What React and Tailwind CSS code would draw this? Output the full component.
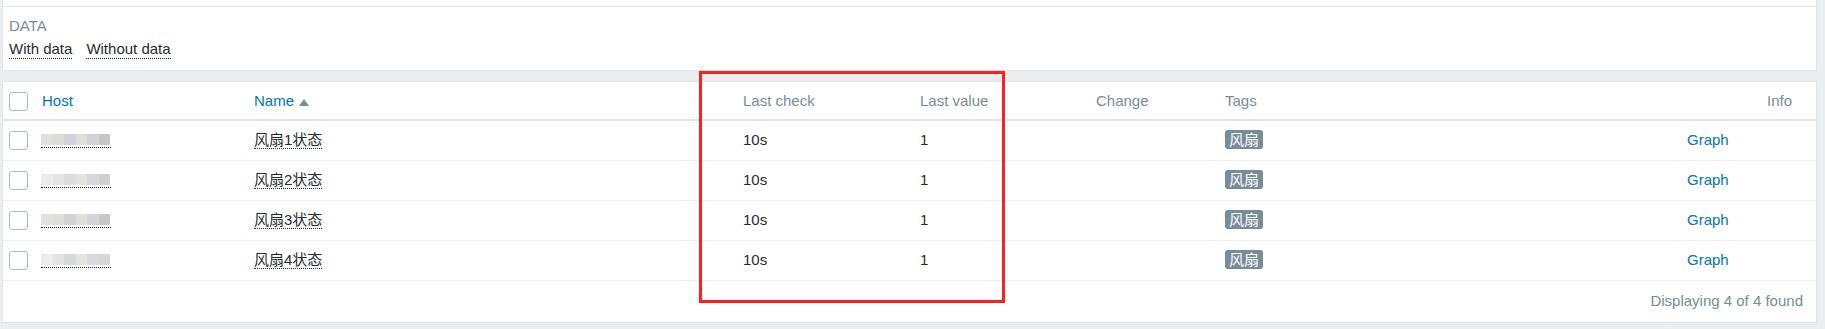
import React from 'react';

const cols = 'grid grid-cols-[33px_212px_489px_177px_176px_129px_462px_80px_55px]';

const blurColors = [
    ['#e2dfd7', '#dcdbd6', '#ced3d7', '#e0ded7', '#d3d3d6', '#c6c5c9'],
    ['#ecebe7', '#e6e5e1', '#d9dde0', '#e4e3de', '#d7d8db', '#d0d0d3'],
    ['#e3e1da', '#dfded8', '#cfd4d7', '#e1dfd9', '#d4d5d8', '#c8c7ca'],
    ['#eeede9', '#e4e4e0', '#d5d9dc', '#e5e4df', '#d8dadd', '#d9d6d9'],
];

const rows = [1, 2, 3, 4];

const BlurredHost = ({ palette }) => (
    <span className="inline-flex flex-col">
        <span className="flex h-[11px] blur-[0.6px]">
            {palette.map((c, i) => (
                <span key={i} className="w-[11.5px] h-full" style={{ background: c }} />
            ))}
        </span>
        <span className="mt-[2px] w-[70px] border-b border-dotted border-[#1f2c33]" />
    </span>
);

const Checkbox = () => (
    <span className="block w-[19px] h-[19px] border border-[#acbbc2] rounded-[3px] bg-white" />
);

export default function App() {
    return (
        <div className="relative w-[1825px] h-[329px] bg-[#ebeef0] font-['Liberation_Sans','Noto_Sans_CJK_SC',sans-serif] text-[15px] text-[#1f2c33] overflow-hidden">
            <div className="pl-[2px] pr-[8px]">
                {/* Filter */}
                <div className="bg-white border-x border-b border-[#dfe4e7]">
                    <div className="h-[7px] border-b border-[#dfe4e7]" />
                    <div className="pt-[10px] pb-[11px] pl-[6px]">
                        <div className="leading-[18px] text-[#768d99]">DATA</div>
                        <div className="mt-[5px] flex gap-[14px] leading-[18px]">
                            <span className="border-b border-dotted border-[#1f2c33]">With data</span>
                            <span className="border-b border-dotted border-[#1f2c33]">Without data</span>
                        </div>
                    </div>
                </div>

                {/* Table */}
                <div className="mt-[10px] bg-white border border-[#dfe4e7]">
                    <div className={`${cols} h-[39px] pt-[1px] items-center border-b-2 border-[#dfe4e7] text-[#768d99]`}>
                        <div className="pl-[6px]"><Checkbox /></div>
                        <div className="pl-[6px] text-[#0275b8]">Host</div>
                        <div className="pl-[6px] flex items-center gap-[5px] text-[#0275b8]">
                            Name
                            <svg width="10" height="7" viewBox="0 0 10 7" className="mt-[2px]">
                                <polygon points="5,0 10,7 0,7" fill="#768d99" />
                            </svg>
                        </div>
                        <div className="pl-[6px]">Last check</div>
                        <div className="pl-[6px]">Last value</div>
                        <div className="pl-[6px]">Change</div>
                        <div className="pl-[6px]">Tags</div>
                        <div />
                        <div className="pl-[6px]">Info</div>
                    </div>
                    {rows.map((n, i) => (
                        <div key={n} className={`${cols} h-[40px] items-center border-b border-[#ebeef0]`}>
                            <div className="pl-[6px]"><Checkbox /></div>
                            <div className="pl-[5px] flex"><BlurredHost palette={blurColors[i]} /></div>
                            <div className="pl-[6px]">
                                <span className="border-b border-dotted border-[#1f2c33] leading-[17px] inline-block">风扇{n}状态</span>
                            </div>
                            <div className="pl-[6px]">10s</div>
                            <div className="pl-[6px]">1</div>
                            <div />
                            <div className="pl-[6px]">
                                <span className="inline-flex items-center h-[19px] px-[4px] rounded-[3px] bg-[#768d99] text-white text-[15px] leading-none">风扇</span>
                            </div>
                            <div className="pl-[6px] text-[#0275b8]">Graph</div>
                            <div />
                        </div>
                    ))}
                    <div className="h-[41px] flex items-center justify-end pr-[13px] text-[#768d99]">
                        Displaying 4 of 4 found
                    </div>
                </div>
            </div>

            {/* Annotation */}
            <div className="absolute left-[699px] top-[71px] w-[306px] h-[232px] border-[3px] border-[#ff1f1f]" />
        </div>
    );
}
